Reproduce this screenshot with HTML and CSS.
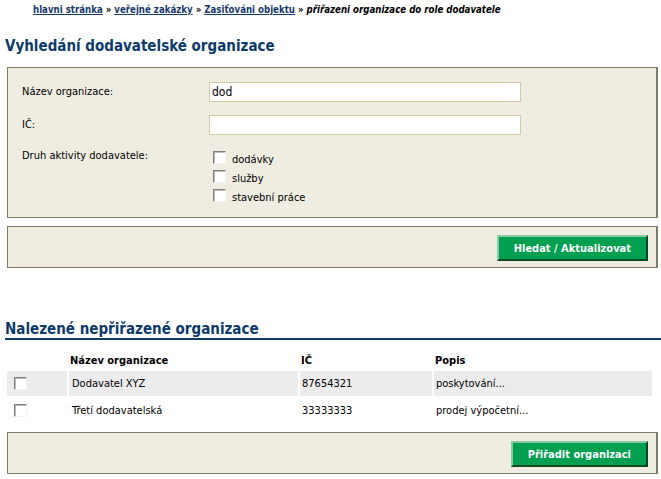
FILE: index.html
```html
<!DOCTYPE html>
<html lang="cs">
<head>
<meta charset="utf-8">
<title>Vyhledání dodavatelské organizace</title>
<link rel="stylesheet" href="styles.css">
</head>
<body>
<div class="page">
  <div class="crumbs">
    <a href="#">hlavni stránka</a> » <a href="#">veřejné zakázky</a> » <a href="#">Zasiťováni objektu</a> » <em>přiřazeni organizace do role dodavatele</em>
  </div>

  <h1 class="title">Vyhledání dodavatelské organizace</h1>

  <div class="panel form">
    <div class="row">
      <label class="lbl">Název organizace:</label>
      <input class="field" type="text" value="dod">
    </div>
    <div class="row">
      <label class="lbl">IČ:</label>
      <input class="field" type="text" value="">
    </div>
    <div class="row top">
      <label class="lbl">Druh aktivity dodavatele:</label>
      <div class="checks">
        <label class="check"><input class="cb" type="checkbox"><span>dodávky</span></label>
        <label class="check"><input class="cb" type="checkbox"><span>služby</span></label>
        <label class="check"><input class="cb" type="checkbox"><span>stavební práce</span></label>
      </div>
    </div>
  </div>

  <div class="panel actions">
    <button class="btn" type="button">Hledat / Aktualizovat</button>
  </div>

  <h2 class="section">Nalezené nepřiřazené organizace</h2>

  <table class="results">
    <thead>
      <tr>
        <th class="c-sel"></th>
        <th class="c-name">Název organizace</th>
        <th class="c-ic">IČ</th>
        <th class="c-desc">Popis</th>
      </tr>
    </thead>
    <tbody>
      <tr class="odd">
        <td class="c-sel"><input class="cb" type="checkbox"></td>
        <td class="c-name">Dodavatel XYZ</td>
        <td class="c-ic">87654321</td>
        <td class="c-desc">poskytování...</td>
      </tr>
      <tr>
        <td class="c-sel"><input class="cb" type="checkbox"></td>
        <td class="c-name">Třetí dodavatelská</td>
        <td class="c-ic">33333333</td>
        <td class="c-desc">prodej výpočetní...</td>
      </tr>
    </tbody>
  </table>

  <div class="panel actions last">
    <button class="btn" type="button">Přiřadit organizaci</button>
  </div>
</div>
</body>
</html>
```

FILE: styles.css
```css
html, body {
  margin: 0;
  padding: 0;
  background: #ffffff;
}

body {
  font-family: "DejaVu Sans Condensed", "DejaVu Sans", sans-serif;
  font-stretch: condensed;
  font-size: 11px;
  color: #000;
}

.page {
  padding: 3px 3px 0 7px;
}

.crumbs {
  padding-left: 26px;
  font-size: 9.6px;
  line-height: 14px;
  font-weight: bold;
  color: #000;
}

.crumbs a {
  color: #1b3a6a;
  text-decoration: underline;
}

.crumbs em {
  font-style: italic;
}

.title {
  margin: 20px 0 12px -2px;
  font-size: 15px;
  line-height: 18px;
  font-weight: bold;
  color: #0d3a6b;
}

.panel {
  background: #efede2;
  border: 1px solid #827c66;
  border-right-width: 2px;
}

.form {
  padding: 14px 14px 12px 14px;
  display: flex;
  flex-direction: column;
  gap: 13px;
}

.row {
  display: flex;
  align-items: center;
}

.row.top {
  align-items: flex-start;
}

.lbl {
  width: 187px;
  flex: none;
  line-height: 14px;
}

.row.top .lbl {
  padding-top: 1px;
}

.field {
  width: 312px;
  height: 20px;
  box-sizing: border-box;
  margin: 0;
  padding: 0 2px;
  border: 1px solid #d3cda6;
  background: #fff;
  font-family: inherit;
  font-stretch: condensed;
  font-size: 12px;
  color: #000;
  outline: none;
}

.checks {
  display: flex;
  flex-direction: column;
  padding-left: 4px;
}

.check {
  display: flex;
  align-items: center;
  height: 19px;
  gap: 6px;
}

.check span {
  padding-top: 4px;
}

.cb {
  appearance: none;
  -webkit-appearance: none;
  width: 13px;
  height: 13px;
  margin: 0;
  box-sizing: border-box;
  background: #fff;
  border: 1px solid;
  border-color: #7f7f7f #f4f4f4 #f4f4f4 #7f7f7f;
  box-shadow: inset 1px 1px 0 #bdbdbd;
  vertical-align: middle;
}

.actions {
  margin-top: 8px;
  padding: 8px 8px 6px 8px;
  display: flex;
  justify-content: flex-end;
}

.btn {
  height: 26px;
  box-sizing: border-box;
  padding: 0 15px;
  margin: 0;
  background: #00a050;
  border: 2px solid;
  border-color: #86c9a2 #004a1e #004a1e #86c9a2;
  color: #fff;
  font-family: inherit;
  font-stretch: condensed;
  font-size: 11px;
  font-weight: bold;
  cursor: pointer;
}

.section {
  margin: 53px -3px 0 -2px;
  font-size: 15px;
  line-height: 17px;
  font-weight: bold;
  color: #0d3a6b;
  border-bottom: 2px solid #0d3a6b;
}

.results {
  margin: 9px 0 0 -2px;
  border-collapse: separate;
  border-spacing: 2px;
}

.results th {
  height: 18px;
  padding: 0 1px;
  text-align: left;
  font-weight: bold;
  vertical-align: middle;
}

.results td {
  height: 25px;
  padding: 0 2px;
  vertical-align: middle;
}

.results tr.odd td {
  background: #ececec;
}

.results .c-sel {
  width: 60px;
  box-sizing: border-box;
  padding-left: 7px;
}

.results .c-name {
  width: 229px;
  box-sizing: border-box;
}

.results td.c-name {
  padding-left: 3px;
}

.results .c-ic {
  width: 132px;
  box-sizing: border-box;
}

.results .c-desc {
  width: 218px;
  box-sizing: border-box;
}

.last {
  margin-top: 7px;
}
```
